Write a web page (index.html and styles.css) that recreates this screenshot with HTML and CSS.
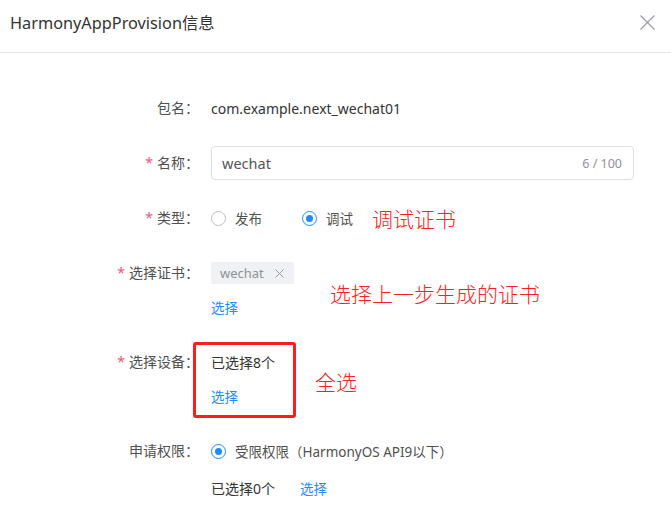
FILE: index.html
```html
<!DOCTYPE html>
<html lang="zh-CN">
<head>
<meta charset="utf-8">
<title>HarmonyAppProvision信息</title>
<link rel="stylesheet" href="styles.css">
</head>
<body>
<div class="dialog">
  <div class="header">
    <span class="title">HarmonyAppProvision信息</span>
    <svg class="close" width="15" height="15" viewBox="0 0 15 15"><path d="M0.5 0.5L14.5 14.5M14.5 0.5L0.5 14.5" stroke="#9a9ca2" stroke-width="1.2" fill="none"/></svg>
  </div>
  <div class="body">
    <div class="item">
      <div class="label">包名：</div>
      <div class="content"><div class="line value">com.example.next_wechat01</div></div>
    </div>
    <div class="item">
      <div class="label"><span class="req">*</span>名称：</div>
      <div class="content">
        <div class="input"><span class="input-text">wechat</span><span class="count">6 / 100</span></div>
      </div>
    </div>
    <div class="item">
      <div class="label"><span class="req">*</span>类型：</div>
      <div class="content">
        <div class="line">
          <span class="radio"></span><span class="radio-label gap">发布</span>
          <span class="radio checked"></span><span class="radio-label">调试</span>
          <span class="note note-inline">调试证书</span>
        </div>
      </div>
    </div>
    <div class="item">
      <div class="label"><span class="req">*</span>选择证书：</div>
      <div class="content">
        <div class="line"><span class="tag">wechat<svg class="tag-x" width="9" height="9" viewBox="0 0 9 9"><path d="M0.5 0.5L8.5 8.5M8.5 0.5L0.5 8.5" stroke="#9a9ca1" stroke-width="1" fill="none"/></svg></span></div>
        <div class="line"><span class="link">选择</span></div>
      </div>
      <span class="note note-cert">选择上一步生成的证书</span>
    </div>
    <div class="item">
      <div class="label"><span class="req">*</span>选择设备：</div>
      <div class="content">
        <div class="line value">已选择8个</div>
        <div class="line"><span class="link">选择</span></div>
      </div>
      <div class="red-box"></div>
      <span class="note note-all">全选</span>
    </div>
    <div class="item">
      <div class="label">申请权限：</div>
      <div class="content">
        <div class="line"><span class="radio checked"></span><span class="radio-label">受限权限（HarmonyOS API9以下）</span></div>
        <div class="line sub"><span class="value">已选择0个</span><span class="link link-gap">选择</span></div>
      </div>
    </div>
  </div>
</div>
</body>
</html>
```
FILE: styles.css
```css
html, body {
  margin: 0;
  padding: 0;
  background: #fff;
}
body {
  font-family: "Noto Sans", "Noto Sans CJK SC", sans-serif;
  font-size: 14px;
  color: #4a4a4a;
}
.dialog {
  width: 671px;
  height: 509px;
  overflow: hidden;
}
.header {
  height: 44px;
  padding: 0 16px 8px 10px;
  display: flex;
  align-items: center;
  justify-content: space-between;
  border-bottom: 1px solid #e4e4e4;
}
.title {
  font-size: 16.3px;
  color: #333;
}
.close {
  display: block;
}
.body {
  padding-top: 38px;
}
.item {
  display: flex;
  position: relative;
  margin-bottom: 21px;
}
.label {
  width: 211px;
  box-sizing: border-box;
  padding-right: 12px;
  text-align: right;
  line-height: 34px;
  flex-shrink: 0;
  color: #505050;
}
.req {
  color: #f2557a;
  margin-right: 4px;
}
.content {
  flex: 1;
}
.line {
  height: 34px;
  display: flex;
  align-items: center;
  white-space: nowrap;
}
.value {
  color: #333;
}
.input {
  width: 423px;
  height: 34px;
  box-sizing: border-box;
  border: 1px solid #dcdfe6;
  border-radius: 4px;
  display: flex;
  align-items: center;
  justify-content: space-between;
  padding: 0 11px 0 10px;
}
.input-text {
  color: #555;
  font-size: 14.5px;
}
.count {
  color: #909399;
  font-size: 12.5px;
}
.radio {
  width: 15px;
  height: 15px;
  box-sizing: border-box;
  border: 1px solid #bcc0c6;
  border-radius: 50%;
  background: #fff;
  position: relative;
  margin-right: 9px;
  flex-shrink: 0;
}
.radio.checked {
  border-color: #1a8cff;
}
.radio.checked::after {
  content: "";
  position: absolute;
  left: 3px;
  top: 3px;
  width: 7px;
  height: 7px;
  border-radius: 50%;
  background: #1a8cff;
}
.radio-label {
  color: #505050;
  font-size: 13.5px;
}
.radio-label.gap {
  margin-right: 40px;
}
.tag {
  height: 22px;
  width: 83px;
  box-sizing: border-box;
  background: #eff1f4;
  border-radius: 2px;
  padding-left: 9px;
  display: flex;
  align-items: center;
  color: #8e9196;
  font-size: 13px;
}
.tag-x {
  margin-left: 11px;
  display: block;
}
.link {
  color: #1a8cff;
  font-size: 13.5px;
}
.link-gap {
  margin-left: 25px;
}
.sub {
  margin-top: 3px;
}
.note {
  color: #ff2020;
  font-family: "Noto Sans CJK SC", sans-serif;
  font-weight: 300;
  font-size: 21px;
  line-height: 24px;
}
.note-inline {
  margin-left: 19px;
}
.note-cert {
  position: absolute;
  left: 330px;
  top: 25px;
}
.note-all {
  position: absolute;
  left: 315px;
  top: 24px;
}
.red-box {
  position: absolute;
  left: 193px;
  top: -3px;
  width: 103px;
  height: 76px;
  box-sizing: border-box;
  border: 3px solid #ff1c1c;
  border-radius: 3px;
}
```
